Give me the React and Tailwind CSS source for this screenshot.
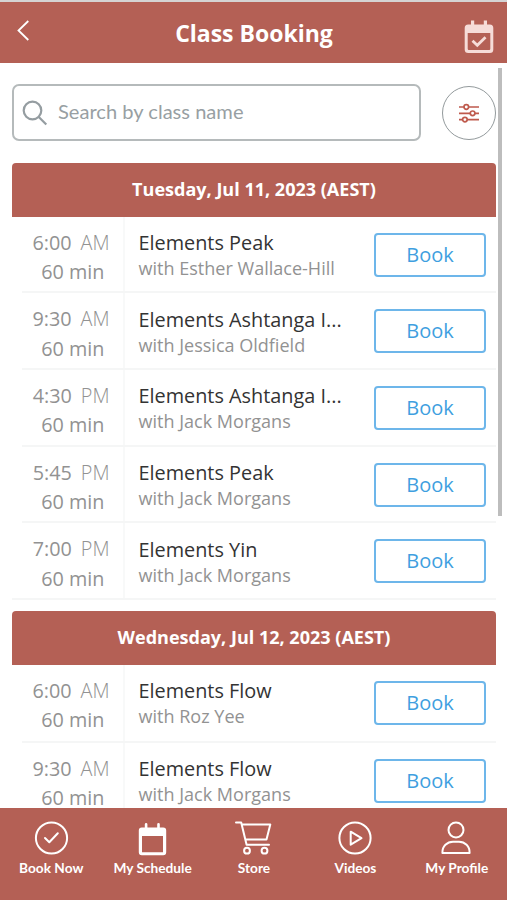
import clsx from 'clsx';

const schedule = [
    {
        date: 'Tuesday, Jul 11, 2023 (AEST)',
        classes: [
            { time: '6:00', period: 'AM', name: 'Elements Peak', teacher: 'Esther Wallace-Hill' },
            { time: '9:30', period: 'AM', name: 'Elements Ashtanga I...', teacher: 'Jessica Oldfield' },
            { time: '4:30', period: 'PM', name: 'Elements Ashtanga I...', teacher: 'Jack Morgans' },
            { time: '5:45', period: 'PM', name: 'Elements Peak', teacher: 'Jack Morgans' },
            { time: '7:00', period: 'PM', name: 'Elements Yin', teacher: 'Jack Morgans' },
        ],
    },
    {
        date: 'Wednesday, Jul 12, 2023 (AEST)',
        classes: [
            { time: '6:00', period: 'AM', name: 'Elements Flow', teacher: 'Roz Yee' },
            { time: '9:30', period: 'AM', name: 'Elements Flow', teacher: 'Jack Morgans' },
        ],
    },
];

const tabs = [
    { label: 'Book Now', icon: BookIcon },
    { label: 'My Schedule', icon: ScheduleIcon },
    { label: 'Store', icon: CartIcon },
    { label: 'Videos', icon: VideoIcon },
    { label: 'My Profile', icon: ProfileIcon },
];

function BookIcon() {
    return (
        <svg width="36" height="36" viewBox="0 0 36 36" fill="none" stroke="currentColor" strokeWidth="2" strokeLinecap="round" strokeLinejoin="round">
            <circle cx="18.500" cy="18" r="15.600" />
            <path d="M12 18l4.300 4.200 8.500-9" />
        </svg>
    );
}

function ScheduleIcon() {
    return (
        <svg width="36" height="36" viewBox="0 0 36 36" fill="currentColor">
            <path fillRule="evenodd" d="M10.800 4.300a1 1 0 0 1 2.600 0v3.200h9.800V4.300a1 1 0 0 1 2.600 0v3.200h3.400a3 3 0 0 1 3 3v21.800a3 3 0 0 1-3 3H7.800a3 3 0 0 1-3-3V10.500a3 3 0 0 1 3-3h3zM8 16v16.300h21V16z" />
        </svg>
    );
}

function CartIcon() {
    return (
        <svg width="38" height="36" viewBox="0 0 38 36" fill="none" stroke="currentColor" strokeWidth="2" strokeLinecap="round" strokeLinejoin="round">
            <path d="M2 2.500h5.200l5.400 22.300h22.400M7.700 4.500h28.600L32.500 19.500h-21" />
            <circle cx="13" cy="30.700" r="2.900" />
            <circle cx="30.500" cy="30.700" r="2.900" />
        </svg>
    );
}

function VideoIcon() {
    return (
        <svg width="36" height="36" viewBox="0 0 36 36" fill="none" stroke="currentColor" strokeWidth="2" strokeLinejoin="round">
            <circle cx="18" cy="18" r="15.600" />
            <path d="M13.700 11.700v13L24.500 18.200z" />
        </svg>
    );
}

function ProfileIcon() {
    return (
        <svg width="36" height="36" viewBox="0 0 36 36" fill="none" stroke="currentColor" strokeWidth="2" strokeLinejoin="round">
            <circle cx="18" cy="9.900" r="7.500" />
            <path d="M4.400 33c-.3-6.800 4.800-11.300 10.600-11.300h6c5.800 0 10.900 4.500 10.600 11.300z" />
        </svg>
    );
}

function Header() {
    return (
        <header className="flex h-[63px] shrink-0 items-center justify-between border-t-2 border-[#d5d3d3] bg-[#b46055] pr-[12px] pl-[15px] text-white">
            <svg width="30" height="22" viewBox="0 0 30 22" fill="none" stroke="currentColor" strokeWidth="1.800" className="mb-1">
                <path d="M13.300 1L3.500 10.500l9.800 9.500" />
            </svg>
            <h1 className="pt-px text-[23px] font-bold whitespace-nowrap">Class Booking</h1>
            <svg width="32" height="34" viewBox="0 0 32 34" className="mt-2 text-[#f6dcd8]">
                <path fill="currentColor" fillRule="evenodd" d="M8 .5h3.200v4h9.600v-4H24v4h2.800a3.500 3.500 0 0 1 3.500 3.500v21.500a3.500 3.500 0 0 1-3.500 3.500H5.200a3.500 3.500 0 0 1-3.500-3.500V8a3.500 3.500 0 0 1 3.500-3.500H8zM4.700 13v15.500c0 1 .5 1.500 1.500 1.500h19.600c1 0 1.500-.5 1.500-1.500V13z" />
                <path d="M9.500 20.800l4.800 4.500 8.200-8" fill="none" stroke="currentColor" strokeWidth="2.800" />
            </svg>
        </header>
    );
}

function SearchBar() {
    return (
        <div className="mt-[21px] flex items-center justify-between">
            <div className="flex h-[57px] w-[409px] items-center rounded-[7px] border-2 border-[#b5babb] pl-[8px]">
                <svg width="26" height="26" viewBox="0 0 26 26" fill="none" stroke="#959da1" strokeWidth="2.200" className="shrink-0">
                    <circle cx="10.500" cy="10.500" r="8.800" />
                    <path d="M16.800 17l7.500 7.500" />
                </svg>
                <span className="ml-[10px] pb-[2px] font-['Lato','Open_Sans',sans-serif] text-[20.100px] whitespace-nowrap text-[#989fa3]">
                    Search by class name
                </span>
            </div>
            <button type="button" aria-label="Filters" className="flex size-[54px] items-center justify-center rounded-full border border-[#939a9c] text-[#bf5a4d]">
                <svg width="22" height="20" viewBox="0 0 22 20" fill="none" stroke="currentColor" strokeWidth="1.700">
                    <path d="M1 4h5M10.600 4H21M1 10.300h11.300M16.900 10.300H21M1 16.600h3.600M9.200 16.600H21" />
                    <circle cx="8.300" cy="4" r="2.300" />
                    <circle cx="14.600" cy="10.300" r="2.300" />
                    <circle cx="6.900" cy="16.600" r="2.300" />
                </svg>
            </button>
        </div>
    );
}

function ClassRow({ item, last, tall }) {
    return (
        <div className={clsx('flex border-b-2 border-[#f5f6f6]', tall ? 'h-[77.700px]' : 'h-[76.700px]', !last && 'ml-[10px]')}>
            <div className={clsx('shrink-0 border-r-2 border-[#f8f9f9] pt-[11px] text-right text-[19.800px] leading-[29.500px] whitespace-nowrap text-[#929292]', last ? 'w-[113px]' : 'w-[103px]')}>
                <p className="flex justify-end gap-[9px] pr-[13.500px]">
                    {item.time}
                    <span className="font-light">{item.period}</span>
                </p>
                <p className="pr-[18.500px]">60 min</p>
            </div>
            <div className="min-w-0 flex-1 pt-[13.500px] pl-[13.500px] whitespace-nowrap">
                <p className="text-[19.850px] leading-[26px] text-[#333333]">{item.name}</p>
                <p className="text-[18.050px] leading-[24px] text-[#929292]">with {item.teacher}</p>
            </div>
            <button type="button" className="mt-[16px] mr-[10px] h-[44px] w-[112px] shrink-0 rounded-[4px] border-2 border-[#6db6ea] text-[20px] text-[#3f9fe0]">
                Book
            </button>
        </div>
    );
}

function TabBar() {
    return (
        <nav className="grid h-[92px] shrink-0 grid-cols-5 bg-[#b46055] pt-[12px] text-white">
            {tabs.map(({ label, icon: Icon }) => (
                <button key={label} type="button" className="flex flex-col items-center">
                    <Icon />
                    <span className="mt-[3px] ml-px font-['Lato','Open_Sans',sans-serif] text-[13.700px] leading-[18px] font-bold whitespace-nowrap">{label}</span>
                </button>
            ))}
        </nav>
    );
}

export default function App() {
    return (
        <div className="relative flex h-[900px] w-[507px] flex-col overflow-hidden bg-white font-['Open_Sans','Noto_Sans',sans-serif]">
            <Header />
            <main className="min-h-0 flex-1 overflow-hidden pr-[11px] pl-[12px]">
                <SearchBar />
                {schedule.map((day, index) => (
                    <section key={day.date} className={index === 0 ? 'mt-[21.500px]' : 'mt-[11px]'}>
                        <h2 className="flex h-[54px] items-center justify-center rounded-t-[4px] bg-[#b46055] text-[18.050px] font-bold text-white">
                            {day.date}
                        </h2>
                        {day.classes.map((item, i) => (
                            <ClassRow
                                key={item.time + item.period}
                                item={item}
                                last={index === 0 && i === day.classes.length - 1}
                                tall={index === 1 && i === 0}
                            />
                        ))}
                    </section>
                ))}
            </main>
            <TabBar />
            {/* scroll thumb over the list */}
            <div className="absolute top-[68px] right-[5px] h-[448px] w-[4px] bg-[#bdbdbd]" />
        </div>
    );
}
